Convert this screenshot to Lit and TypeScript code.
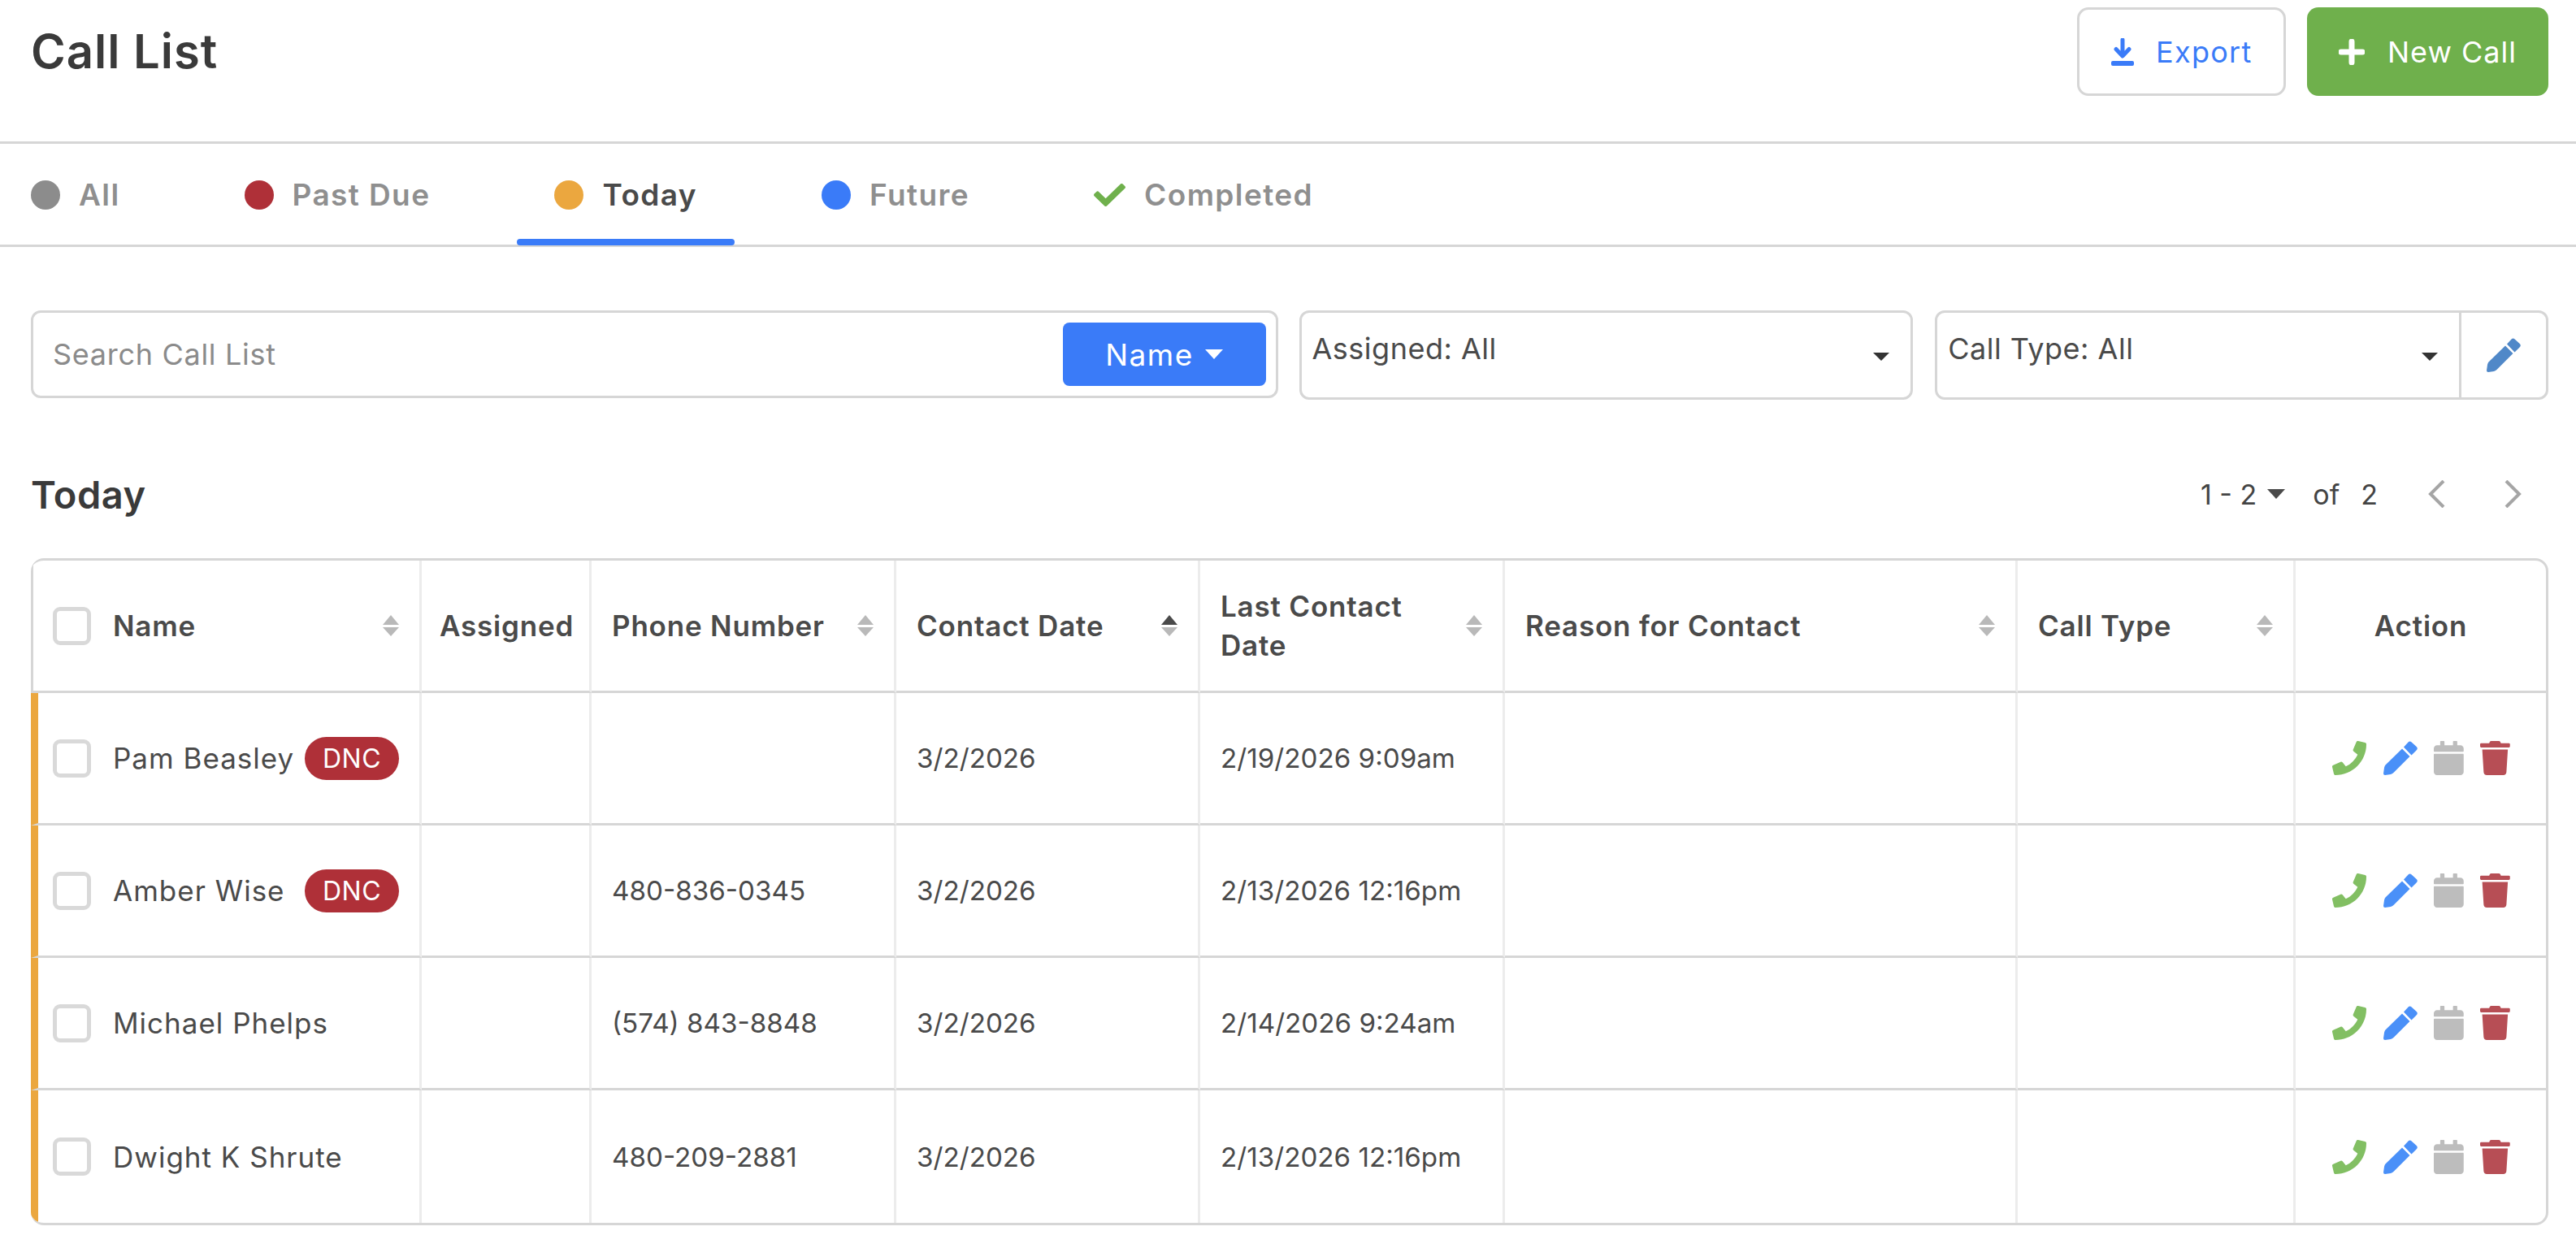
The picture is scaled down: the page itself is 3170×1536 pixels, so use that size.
import { LitElement, css, html, svg } from "lit";
import { customElement } from "lit/decorators.js";

const rows = [
  { name: "Pam Beasley", dnc: true, phone: "", date: "3/2/2026", last: "2/19/2026 9:09am" },
  { name: "Amber Wise", dnc: true, phone: "480-836-0345", date: "3/2/2026", last: "2/13/2026 12:16pm" },
  { name: "Michael Phelps", dnc: false, phone: "(574) 843-8848", date: "3/2/2026", last: "2/14/2026 9:24am" },
  { name: "Dwight K Shrute", dnc: false, phone: "480-209-2881", date: "3/2/2026", last: "2/13/2026 12:16pm" },
];

const phoneIcon = svg`<path d="M493.4 24.6l-104-24c-11.3-2.6-22.9 3.3-27.5 13.9l-48 112c-4.2 9.8-1.4 21.3 6.9 28l60.6 49.6c-36 76.7-98.9 140.5-177.2 177.2l-49.6-60.6c-6.8-8.3-18.2-11.1-28-6.9l-112 48C3.9 366.5-2 378.1.6 389.4l24 104C27.1 504.2 36.7 512 48 512c256.1 0 464-207.5 464-464 0-11.2-7.7-20.9-18.6-23.4z"/>`;
const calendarIcon = svg`<path d="M12 192h424c6.6 0 12 5.4 12 12v260c0 26.5-21.5 48-48 48H48c-26.5 0-48-21.5-48-48V204c0-6.6 5.4-12 12-12zm436-44v-36c0-26.5-21.5-48-48-48h-48V12c0-6.6-5.4-12-12-12h-40c-6.6 0-12 5.4-12 12v52H160V12c0-6.6-5.4-12-12-12h-40c-6.6 0-12 5.4-12 12v52H48C21.5 64 0 85.5 0 112v36c0 6.6 5.4 12 12 12h424c6.6 0 12-5.4 12-12z"/>`;
const trashIcon = svg`<path d="M432 32H312l-9.4-18.7A24 24 0 0 0 281.1 0H166.8a23.72 23.72 0 0 0-21.4 13.3L136 32H16A16 16 0 0 0 0 48v32a16 16 0 0 0 16 16h416a16 16 0 0 0 16-16V48a16 16 0 0 0-16-16zM53.2 467a48 48 0 0 0 47.9 45h245.8a48 48 0 0 0 47.9-45L416 128H32z"/>`;
const checkIcon = svg`<path d="M173.898 439.404l-166.4-166.4c-9.997-9.997-9.997-26.206 0-36.204l36.203-36.204c9.997-9.998 26.207-9.998 36.204 0L192 312.69 432.095 72.596c9.997-9.997 26.207-9.997 36.204 0l36.203 36.204c9.997 9.997 9.997 26.206 0 36.204l-294.4 294.401c-9.998 9.997-26.207 9.997-36.204-.001z"/>`;
const pencilIcon = svg`<path d="M25 7.500l5.500-6a3 3 0 0 1 4.200-.1l6 5.600a3 3 0 0 1 .1 4.200L34.500 17.500zM23 9.500l9.500 9.500L13 38.500c-1 1-2.500 2-4 2.500L2 42a2 2 0 0 1-2-2l1-7c.3-1.500 1-3 2-4z"/>`;

@customElement("sort-arrows")
class SortArrows extends LitElement {
  static properties = { up: { type: Boolean } };
  up = false;
  static styles = css`
    :host { display: block; flex: none; width: 20px; height: 26px; }
    svg { display: block; width: 20px; height: 26px; }
  `;
  render() {
    return html`<svg viewBox="0 0 20 26">
      <path d="M10 0L20 12H0z" fill=${this.up ? "#4a4a4a" : "#b9b9b9"} />
      <path d="M10 26L0 15h20z" fill="#b9b9b9" />
    </svg>`;
  }
}

@customElement("app-root")
class AppRoot extends LitElement {
  static styles = css`
    :host {
      display: block;
      height: 1536px;
      background: #fff;
      color: #4a4a4a;
      font-family: Inter, "Open Sans", sans-serif;
      font-size: 35px;
      letter-spacing: 1px;
      overflow: hidden;
    }
    .header {
      height: 177px;
      box-sizing: border-box;
      border-bottom: 3px solid #d6d6d6;
      padding: 9px 34px 0 38px;
      display: flex;
      justify-content: space-between;
      align-items: flex-start;
    }
    h1 {
      margin: 21px 0 0;
      font-size: 58px;
      line-height: 66px;
      font-weight: 600;
      color: #3a3a3a;
      letter-spacing: 1px;
    }
    .header-buttons { display: flex; gap: 26px; }
    .btn {
      height: 109px;
      box-sizing: border-box;
      border-radius: 14px;
      font-size: 36px;
      display: flex;
      align-items: center;
    }
    .btn svg { display: block; flex: none; }
    .export {
      width: 257px;
      border: 3px solid #d6d6d6;
      color: #3a7bf8;
      padding-left: 38px;
      gap: 26px;
      letter-spacing: 1.300px;
    }
    .new-call {
      width: 297px;
      background: #6fb04c;
      color: #fff;
      padding-left: 39px;
      gap: 28px;
    }
    .tabs {
      height: 127px;
      box-sizing: border-box;
      border-bottom: 3px solid #d6d6d6;
      padding: 0 0 0 38px;
      display: flex;
      gap: 61px;
    }
    .tab {
      height: 125px;
      box-sizing: border-box;
      padding: 0 46px;
      display: flex;
      align-items: center;
      gap: 23px;
      font-size: 37px;
      font-weight: 600;
      letter-spacing: 1.400px;
      color: #8f8f8f;
      position: relative;
    }
    .tab:first-child { padding-left: 0; }
    .tab.active { color: #4a4a4a; }
    .tab.active::after {
      content: "";
      position: absolute;
      left: 0;
      right: 0;
      bottom: 0;
      height: 8px;
      border-radius: 4px;
      background: #3a7bf8;
    }
    .dot { width: 36px; height: 36px; border-radius: 50%; flex: none; }
    .filters {
      display: flex;
      align-items: flex-start;
      gap: 26px;
      padding: 78px 34px 0 38px;
    }
    .search, .select {
      box-sizing: border-box;
      border: 3px solid #d6d6d6;
      border-radius: 12px;
      display: flex;
    }
    .search {
      width: 1535px;
      height: 108px;
      align-items: center;
      padding: 0 12px 0 24px;
      justify-content: space-between;
      font-size: 36px;
      letter-spacing: 0.700px;
      color: #8b8b8b;
    }
    .name-btn {
      width: 250px;
      height: 78px;
      border-radius: 8px;
      background: #3a7bf8;
      color: #fff;
      font-size: 37px;
      letter-spacing: 1.500px;
      display: flex;
      align-items: center;
      justify-content: center;
      gap: 14px;
    }
    .select { height: 110px; font-size: 36px; letter-spacing: 0.500px; color: #4a4a4a; }
    .assigned { width: 756px; }
    .calltype { width: 755px; margin-left: 1px; }
    .select-main {
      flex: 1;
      display: flex;
      justify-content: space-between;
      padding: 22px 26px 0 13px;
      line-height: 44px;
    }
    .caret { flex: none; width: 20px; height: 10px; margin-top: 27px; fill: #333; }
    .edit {
      width: 107px;
      border-left: 3px solid #d6d6d6;
      display: flex;
      align-items: center;
      justify-content: center;
      box-sizing: border-box;
    }
    .section {
      display: flex;
      justify-content: space-between;
      align-items: center;
      padding: 0 67px 0 38px;
      margin-top: 71px;
      height: 90px;
    }
    h2 {
      margin: 0;
      font-size: 47px;
      font-weight: 600;
      letter-spacing: 0.500px;
      color: #3a3a3a;
    }
    .pager {
      display: flex;
      align-items: center;
      font-size: 34px;
      letter-spacing: 0;
      color: #444;
    }
    .pager .caret { margin: 0 34px 0 13px; width: 22px; height: 12px; fill: #4a4a4a; }
    .chev { width: 22px; height: 34px; fill: none; stroke: #a5a5a5; stroke-width: 4; }
    .chev-l { margin-left: 62px; }
    .chev-r { margin-left: 71px; }
    .pager .count { margin-left: 26px; }
    .table {
      margin: 34px 34px 0 38px;
      border: 3px solid #d6d6d6;
      border-left: none;
      border-radius: 16px;
      overflow: hidden;
      display: grid;
      grid-template-columns: 481px 209px 375px 374px 375px 631px 342px 1fr;
    }
    .cell {
      box-sizing: border-box;
      height: 163px;
      border-right: 3px solid #ececec;
      border-bottom: 3px solid #d6d6d6;
      padding: 0 25px;
      display: flex;
      align-items: center;
      white-space: nowrap;
    }
    .cell:nth-child(8n) { border-right: none; }
    .cell.last-row { border-bottom: none; }
    .num { font-size: 33.200px; letter-spacing: 0; }
    .head {
      font-weight: 600;
      line-height: 48px;
      letter-spacing: 0.800px;
      justify-content: space-between;
      gap: 8px;
    }
    .wrap { white-space: normal; max-width: 260px; }
    .first {
      border-left: 3px solid #d6d6d6;
      padding-left: 24px;
      gap: 0;
      justify-content: flex-start;
    }
    .first.row { padding-left: 18px; border-left: 9px solid #eba73f; }
    .first sort-arrows { margin-left: auto; }
    .assigned-head { padding: 0 10px 0 22px; white-space: nowrap; }
    .box {
      box-sizing: border-box;
      width: 47px;
      height: 47px;
      flex: none;
      margin-right: 27px;
      border: 5px solid #d9d9d9;
      border-radius: 9px;
    }
    .dnc {
      flex: none;
      background: #af3038;
      color: #fff;
      font-size: 32px;
      letter-spacing: 0.500px;
      height: 53px;
      width: 116px;
      border-radius: 27px;
      display: flex;
      align-items: center;
      justify-content: center;
      margin-left: auto;
    }
    .action-head { justify-content: center; padding: 0; }
    .actions { justify-content: flex-start; padding: 0 0 0 45px; gap: 20.500px; }
    .actions svg { display: block; height: 42px; flex: none; }
    .ok { fill: #82bf63; }
    .edit-i { fill: #4a90f8; }
    .cal { fill: #bdbdbd; }
    .del { fill: #b74e55; }
  `;

  private tab(label: string, color: string, active = false) {
    return html`<div class="tab ${active ? "active" : ""}">
      <span class="dot" style="background:${color}"></span>${label}
    </div>`;
  }

  private headCell(label: string, up = false, wrap = false) {
    return html`<div class="cell head"><span class=${wrap ? "wrap" : ""}>${label}</span><sort-arrows ?up=${up}></sort-arrows></div>`;
  }

  render() {
    return html`
      <div class="header">
        <h1>Call List</h1>
        <div class="header-buttons">
          <div class="btn export">
            <svg width="30" height="34" viewBox="0 0 30 34">
              <path d="M15 2v19M7 13.500L15 22l8-8.500" fill="none" stroke="#3a7bf8" stroke-width="5" stroke-linecap="round" stroke-linejoin="round" />
              <rect x="1" y="28" width="28" height="6" rx="2" fill="#3a7bf8" />
            </svg>
            Export
          </div>
          <div class="btn new-call">
            <svg width="32" height="32" viewBox="0 0 32 32">
              <path d="M16 3v26M3 16h26" stroke="#fff" stroke-width="7" stroke-linecap="round" />
            </svg>
            New Call
          </div>
        </div>
      </div>
      <div class="tabs">
        ${this.tab("All", "#8c8c8c")}
        ${this.tab("Past Due", "#af3038")}
        ${this.tab("Today", "#eba73f", true)}
        ${this.tab("Future", "#3a7bf8")}
        <div class="tab">
          <svg width="39" height="28" viewBox="0 66 512 380" preserveAspectRatio="none" fill="#6fb04c">${checkIcon}</svg>
          Completed
        </div>
      </div>
      <div class="filters">
        <div class="search">
          Search Call List
          <div class="name-btn">
            Name
            <svg width="22" height="12" viewBox="0 0 22 12"><path d="M0 0h22L11 12z" fill="#fff" /></svg>
          </div>
        </div>
        <div class="select assigned">
          <div class="select-main">
            Assigned: All
            <svg class="caret" viewBox="0 0 20 10"><path d="M0 0h20L10 10z" /></svg>
          </div>
        </div>
        <div class="select calltype">
          <div class="select-main">
            Call Type: All
            <svg class="caret" viewBox="0 0 20 10"><path d="M0 0h20L10 10z" /></svg>
          </div>
          <div class="edit">
            <svg width="42" height="42" viewBox="0 0 42 42" fill="#5088c8">${pencilIcon}</svg>
          </div>
        </div>
      </div>
      <div class="section">
        <h2>Today</h2>
        <div class="pager">
          1 - 2
          <svg class="caret" viewBox="0 0 22 12"><path d="M0 0h22L11 12z" /></svg>
          of <span class="count">2</span>
          <svg class="chev chev-l" viewBox="0 0 22 34"><path d="M19 1L3 17l16 16" /></svg>
          <svg class="chev chev-r" viewBox="0 0 22 34"><path d="M3 1l16 16L3 33" /></svg>
        </div>
      </div>
      <div class="table">
        <div class="cell head first">
          <span class="box"></span><span>Name</span><sort-arrows></sort-arrows>
        </div>
        <div class="cell head assigned-head">Assigned</div>
        ${this.headCell("Phone Number")}
        ${this.headCell("Contact Date", true)}
        ${this.headCell("Last Contact Date", false, true)}
        ${this.headCell("Reason for Contact")}
        ${this.headCell("Call Type")}
        <div class="cell head action-head">Action</div>
        ${rows.map((r, i) => {
          const last = i === rows.length - 1 ? "last-row" : "";
          return html`
            <div class="cell first row ${last}">
              <span class="box"></span><span>${r.name}</span>
              ${r.dnc ? html`<span class="dnc">DNC</span>` : ""}
            </div>
            <div class="cell ${last}"></div>
            <div class="cell num ${last}">${r.phone}</div>
            <div class="cell num ${last}">${r.date}</div>
            <div class="cell num ${last}">${r.last}</div>
            <div class="cell ${last}"></div>
            <div class="cell ${last}"></div>
            <div class="cell actions ${last}">
              <svg viewBox="0 0 512 512" class="ok">${phoneIcon}</svg>
              <svg viewBox="0 0 42 42" class="edit-i">${pencilIcon}</svg>
              <svg viewBox="0 0 448 512" class="cal">${calendarIcon}</svg>
              <svg viewBox="0 0 448 512" class="del">${trashIcon}</svg>
            </div>
          `;
        })}
      </div>
    `;
  }
}
